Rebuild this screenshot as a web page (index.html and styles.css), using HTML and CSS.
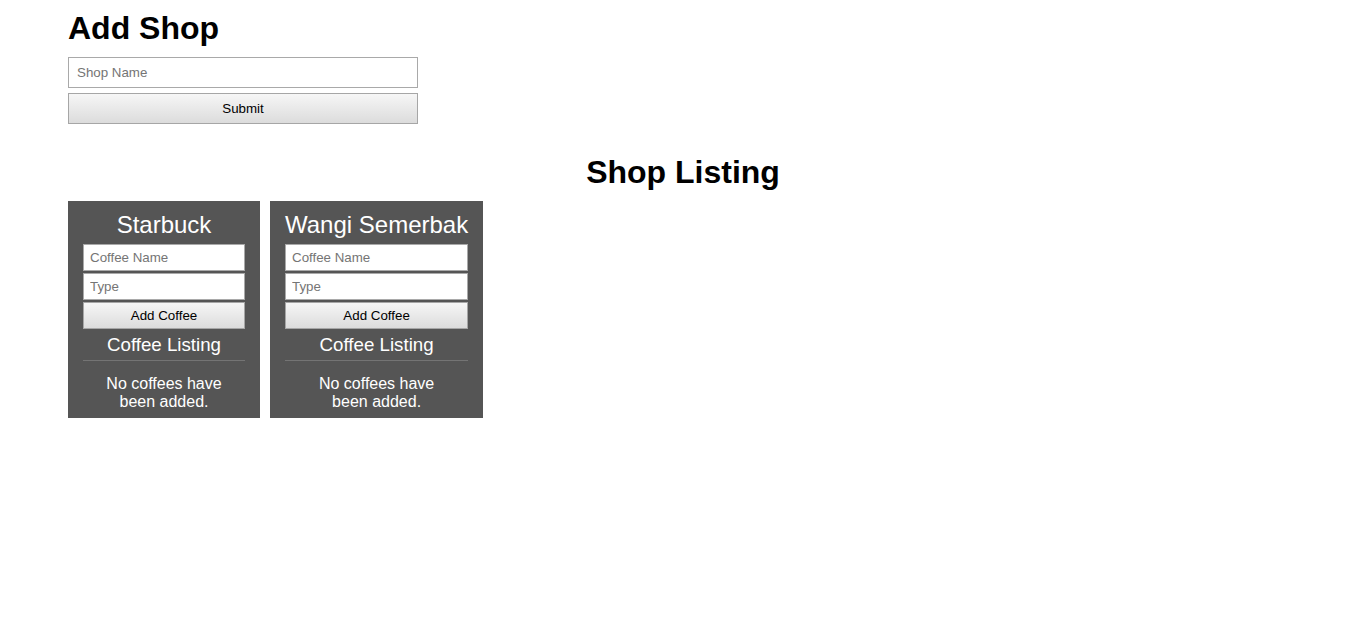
FILE: index.html
```html
<!DOCTYPE html>
<html lang="en">
<head>
<meta charset="utf-8">
<title>Coffee Shops</title>
<link rel="stylesheet" href="styles.css">
</head>
<body>
<div class="page">
  <h1 class="page-title">Add Shop</h1>
  <form class="shop-form">
    <input class="field field-lg" type="text" placeholder="Shop Name">
    <button class="btn btn-lg" type="button">Submit</button>
  </form>

  <h1 class="listing-title">Shop Listing</h1>
  <div class="shops">
    <div class="card">
      <h2 class="card-title">Starbuck</h2>
      <input class="field field-sm" type="text" placeholder="Coffee Name">
      <input class="field field-sm" type="text" placeholder="Type">
      <button class="btn btn-sm" type="button">Add Coffee</button>
      <h3 class="card-sub">Coffee Listing</h3>
      <p class="empty">No coffees have<br>been added.</p>
    </div>
    <div class="card">
      <h2 class="card-title">Wangi Semerbak</h2>
      <input class="field field-sm" type="text" placeholder="Coffee Name">
      <input class="field field-sm" type="text" placeholder="Type">
      <button class="btn btn-sm" type="button">Add Coffee</button>
      <h3 class="card-sub">Coffee Listing</h3>
      <p class="empty">No coffees have<br>been added.</p>
    </div>
  </div>
</div>
</body>
</html>
```

FILE: styles.css
```css
html, body {
  margin: 0;
  padding: 0;
  background: #ffffff;
}

body {
  font-family: "Liberation Sans", Arial, sans-serif;
  color: #000;
}

.page {
  padding: 8px 68px 0;
}

.page-title {
  margin: 0 0 10px;
  padding-top: 2px;
  font-size: 32px;
  line-height: 37px;
  font-weight: bold;
}

.shop-form {
  display: flex;
  flex-direction: column;
  width: 350px;
}

.field {
  box-sizing: border-box;
  font-family: "Liberation Sans", Arial, sans-serif;
  font-size: 13.333px;
  color: #000;
  background: #fff;
  border: 1px solid #a9a9a9;
  border-radius: 0;
  outline: none;
  margin: 0;
}

.field::placeholder {
  color: #757575;
}

.field-lg {
  height: 31px;
  padding: 0 8px;
  margin-bottom: 5px;
}

.btn {
  box-sizing: border-box;
  font-family: "Liberation Sans", Arial, sans-serif;
  font-size: 13.333px;
  color: #000;
  background: linear-gradient(#f6f6f6, #dcdcdc);
  border: 1px solid #a6a6a6;
  border-radius: 0;
  margin: 0;
  padding: 0;
}

.btn-lg {
  height: 31px;
}

.listing-title {
  margin: 30px 0 10px;
  font-size: 32px;
  line-height: 37px;
  font-weight: bold;
  text-align: center;
}

.shops {
  display: flex;
  align-items: flex-start;
  gap: 10px;
}

.card {
  box-sizing: border-box;
  min-width: 192px;
  display: flex;
  flex-direction: column;
  padding: 10px 15px 7px;
  background: #555555;
  color: #fff;
  text-align: center;
}

.card-title {
  margin: 0 0 5px;
  font-size: 24px;
  line-height: 28px;
  font-weight: normal;
  white-space: nowrap;
}

.field-sm,
.btn-sm {
  width: 0;
  min-width: 100%;
  height: 27px;
}

.field-sm {
  padding: 0 6px;
  margin-bottom: 2px;
}

.card-sub {
  margin: 5px 0 0;
  padding-bottom: 5px;
  border-bottom: 1px solid #747474;
  font-size: 18.72px;
  line-height: 21px;
  font-weight: normal;
}

.empty {
  margin: 14px 0 0;
  font-size: 16px;
  line-height: 18px;
}
```
